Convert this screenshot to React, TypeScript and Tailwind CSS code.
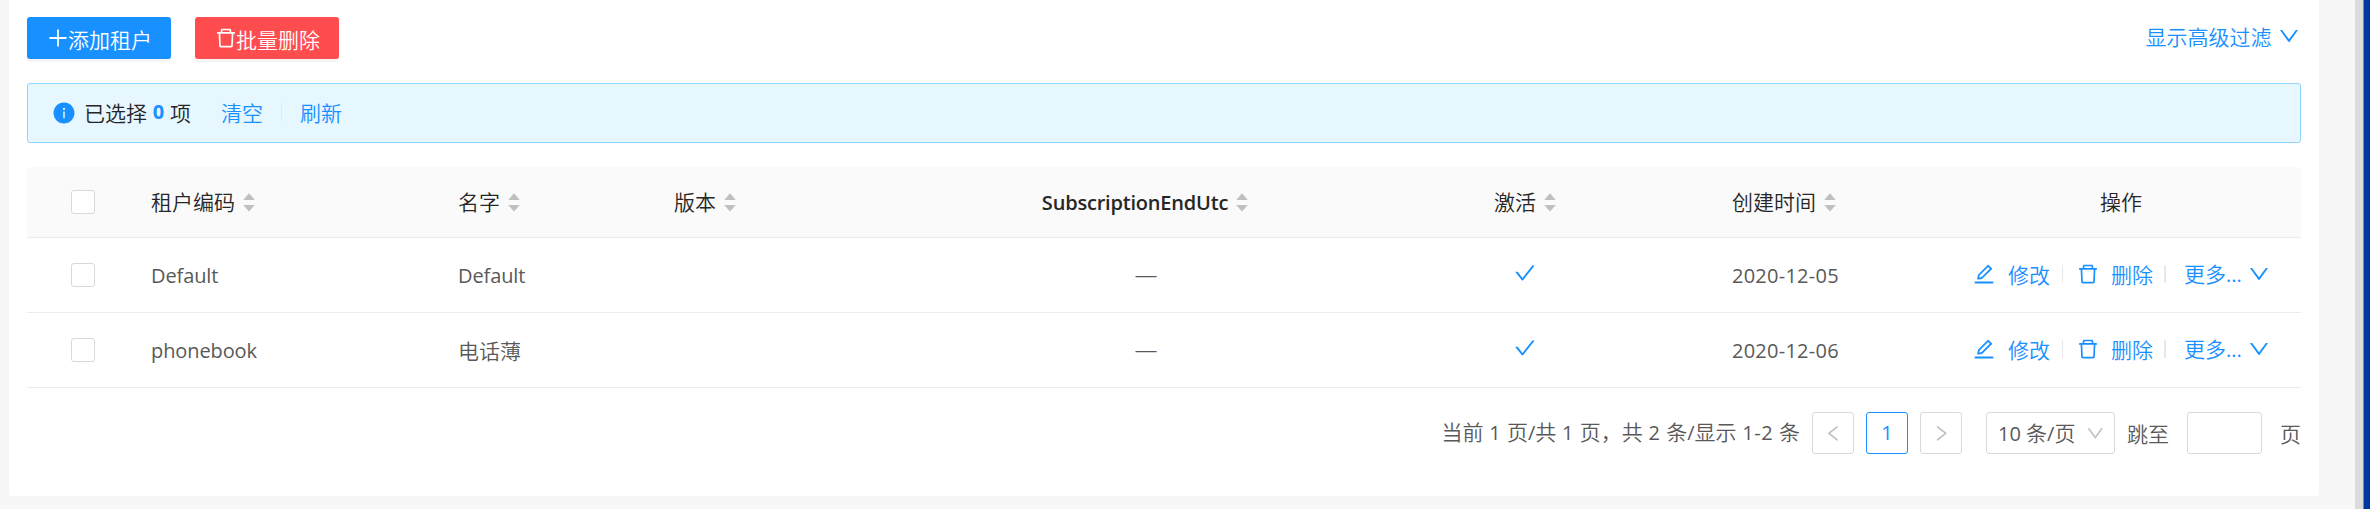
import type { ReactNode } from "react";
import {
  AiFillInfoCircle,
  AiOutlineCheck,
  AiOutlineDelete,
  AiOutlineDown,
  AiOutlineEdit,
  AiOutlineLeft,
  AiOutlinePlus,
  AiOutlineRight,
} from "react-icons/ai";

const COLS =
  "grid grid-cols-[112px_307px_216px_298px_370px_390px_221px_360px] items-center border-b border-[#ececec]";

/** Latin run inside Chinese text */
function L({ children, className = "font-normal" }: { children: ReactNode; className?: string }) {
  return (
    <span className={"whitespace-pre font-['Open_Sans','Noto_Sans',sans-serif] text-[20px] " + className}>
      {children}
    </span>
  );
}

function Sorter() {
  return (
    <svg width="12" height="19" viewBox="0 0 12 19" className="ml-2 shrink-0" fill="#bfbfbf">
      <path d="M6 0.3 11.8 7H0.2Z" />
      <path d="M0.2 12H11.8L6 18.6Z" />
    </svg>
  );
}

function Checkbox() {
  return <span className="mx-auto block size-6 rounded-[3px] border border-[#d9d9d9] bg-white" />;
}

function Head({ label, className = "" }: { label: ReactNode; className?: string }) {
  return (
    <div className={"flex items-center px-3 text-[#262626] " + className}>
      <span className="-mt-[2px]">{label}</span>
      <Sorter />
    </div>
  );
}

function Divider({ className = "w-px" }: { className?: string }) {
  return <span className={"h-[18px] shrink-0 bg-[#e8e8e8] " + className} />;
}

const rows = [
  { code: "Default", name: <L className="font-normal tracking-[-0.1px]">Default</L>, date: "2020-12-05" },
  { code: "phonebook", name: "电话薄", date: "2020-12-06" },
];

function Row({ code, name, date }: { code: string; name: ReactNode; date: string }) {
  return (
    <div className={COLS + " h-[75px] text-[#595959]"}>
      <Checkbox />
      <div className="px-3"><L className="font-normal tracking-[-0.1px]">{code}</L></div>
      <div className="px-3 pb-px">{name}</div>
      <div />
      <div className="pl-[2px] text-center font-['Liberation_Sans',sans-serif]">—</div>
      <div className="flex justify-center pb-[5px] text-[#1890ff]"><AiOutlineCheck size={24} /></div>
      <div className="px-3"><L className="font-normal tracking-[0.25px]">{date}</L></div>
      <div className="flex items-center pb-[2px] pl-[32px] text-[#1890ff]">
        <AiOutlineEdit size={24} className="-mx-[1.5px] mb-px" />
        <span className="ml-[14px]">修改</span>
        <Divider className="ml-[12px] w-px" />
        <AiOutlineDelete size={24} className="mr-[-1.5px] mb-px ml-[12.5px]" />
        <span className="ml-[13px]">删除</span>
        <Divider className="ml-[11px] w-[2px]" />
        <span className="ml-[18px]">更多<L>...</L></span>
        <AiOutlineDown size={24} className="mb-px ml-[5px]" />
      </div>
    </div>
  );
}

export default function App() {
  return (
    <div className="flex h-[509px] w-[2370px] overflow-hidden bg-[#f7f7f7] font-['Noto_Sans_CJK_SC',sans-serif] text-[21px] leading-[32px] font-[350]">
      <main className="ml-[9px] h-[496px] w-[2310px] rounded-b-[3px] bg-white px-[18px] pt-[17px]">
        <div className="flex h-[42px] items-center">
          <button className="flex h-[42px] w-36 items-center justify-center rounded-[3px] bg-[#1890ff] pl-px text-white shadow-[0_3px_0_rgba(0,0,0,0.045)]">
            <AiOutlinePlus size={24} className="-mx-[1.5px]" />
            <span className="pt-px">添加租户</span>
          </button>
          <button className="ml-6 flex h-[42px] w-36 items-center justify-center rounded-[3px] bg-[#ff4d4f] pl-px text-white shadow-[0_3px_0_rgba(0,0,0,0.045)]">
            <AiOutlineDelete size={24} className="-mx-[1.5px]" />
            <span className="pt-px">批量删除</span>
          </button>
          <a className="ml-auto flex items-center pb-[4px] text-[#1890ff]">
            显示高级过滤
            <AiOutlineDown size={24} className="mb-px ml-[5.5px]" />
          </a>
        </div>

        <div className="mt-6 flex h-[60px] items-center rounded-[3px] border border-[#91d5ff] bg-[#e6f7ff] pl-[25px] text-[#262626]">
          <AiFillInfoCircle size={24} className="-mx-[1.5px] text-[#1890ff]" />
          <div className="flex items-center pb-[3px]">
            <span className="ml-[10px]">已选择</span>
            <L className="mr-[5px] ml-[5px] w-[13px] pt-px text-center font-bold text-[#1890ff]">0</L>
            <span>项</span>
            <span className="ml-[30px] text-[#1890ff]">清空</span>
            <Divider className="ml-[18px] w-px" />
            <span className="ml-[18px] text-[#1890ff]">刷新</span>
          </div>
        </div>

        <div className="mt-6">
          <div className={COLS + " h-[71px] rounded-t-[3px] bg-[#fafafa]"}>
            <Checkbox />
            <Head label="租户编码" />
            <Head label="名字" />
            <Head label="版本" />
            <Head
              className="justify-center"
              label={<L className="relative top-px font-semibold tracking-[-0.2px]">SubscriptionEndUtc</L>}
            />
            <Head className="justify-center" label="激活" />
            <Head label="创建时间" />
            <div className="pb-[2px] text-center text-[#262626]">操作</div>
          </div>
          {rows.map((r) => (
            <Row key={r.code} {...r} />
          ))}
        </div>

        <div className="mt-6 flex h-[42px] items-center justify-end text-[#595959]">
          <span className="mr-3 pb-[3px] whitespace-pre">
            当前<L className="font-normal tracking-[0.55px]"> 1 </L>页<L>/</L>共
            <L className="font-normal tracking-[0.55px]"> 1 </L>页，共
            <L className="font-normal tracking-[0.55px]"> 2 </L>条<L>/</L>显示
            <L className="font-normal tracking-[0.55px]"> 1-2 </L>条
          </span>
          <button className="flex size-[42px] items-center justify-center rounded-[3px] border border-[#d9d9d9] text-[#bfbfbf]">
            <AiOutlineLeft size={20.6} />
          </button>
          <button className="ml-3 flex size-[42px] items-center justify-center rounded-[3px] border border-[#1890ff] text-[#1890ff]">
            <L>1</L>
          </button>
          <button className="ml-3 flex size-[42px] items-center justify-center rounded-[3px] border border-[#d9d9d9] text-[#bfbfbf]">
            <AiOutlineRight size={20.6} />
          </button>
          <button className="ml-6 flex h-[42px] w-[129px] items-center rounded-[3px] border border-[#d9d9d9] pl-[11px]">
            <span className="whitespace-pre"><L>10 </L>条<L>/</L>页</span>
            <AiOutlineDown size={20.6} className="mr-[8px] ml-auto text-[#bfbfbf]" />
          </button>
          <span className="ml-[12px]">跳至</span>
          <span className="ml-[18px] h-[42px] w-[75px] rounded-[3px] border border-[#d9d9d9]" />
          <span className="ml-[18px]">页</span>
        </div>
      </main>
      <div className="ml-auto w-2 bg-[#dbdbdb]" />
      <div className="w-[7px] border-l border-[#4a9cc4] bg-[#0037a0]" />
    </div>
  );
}
